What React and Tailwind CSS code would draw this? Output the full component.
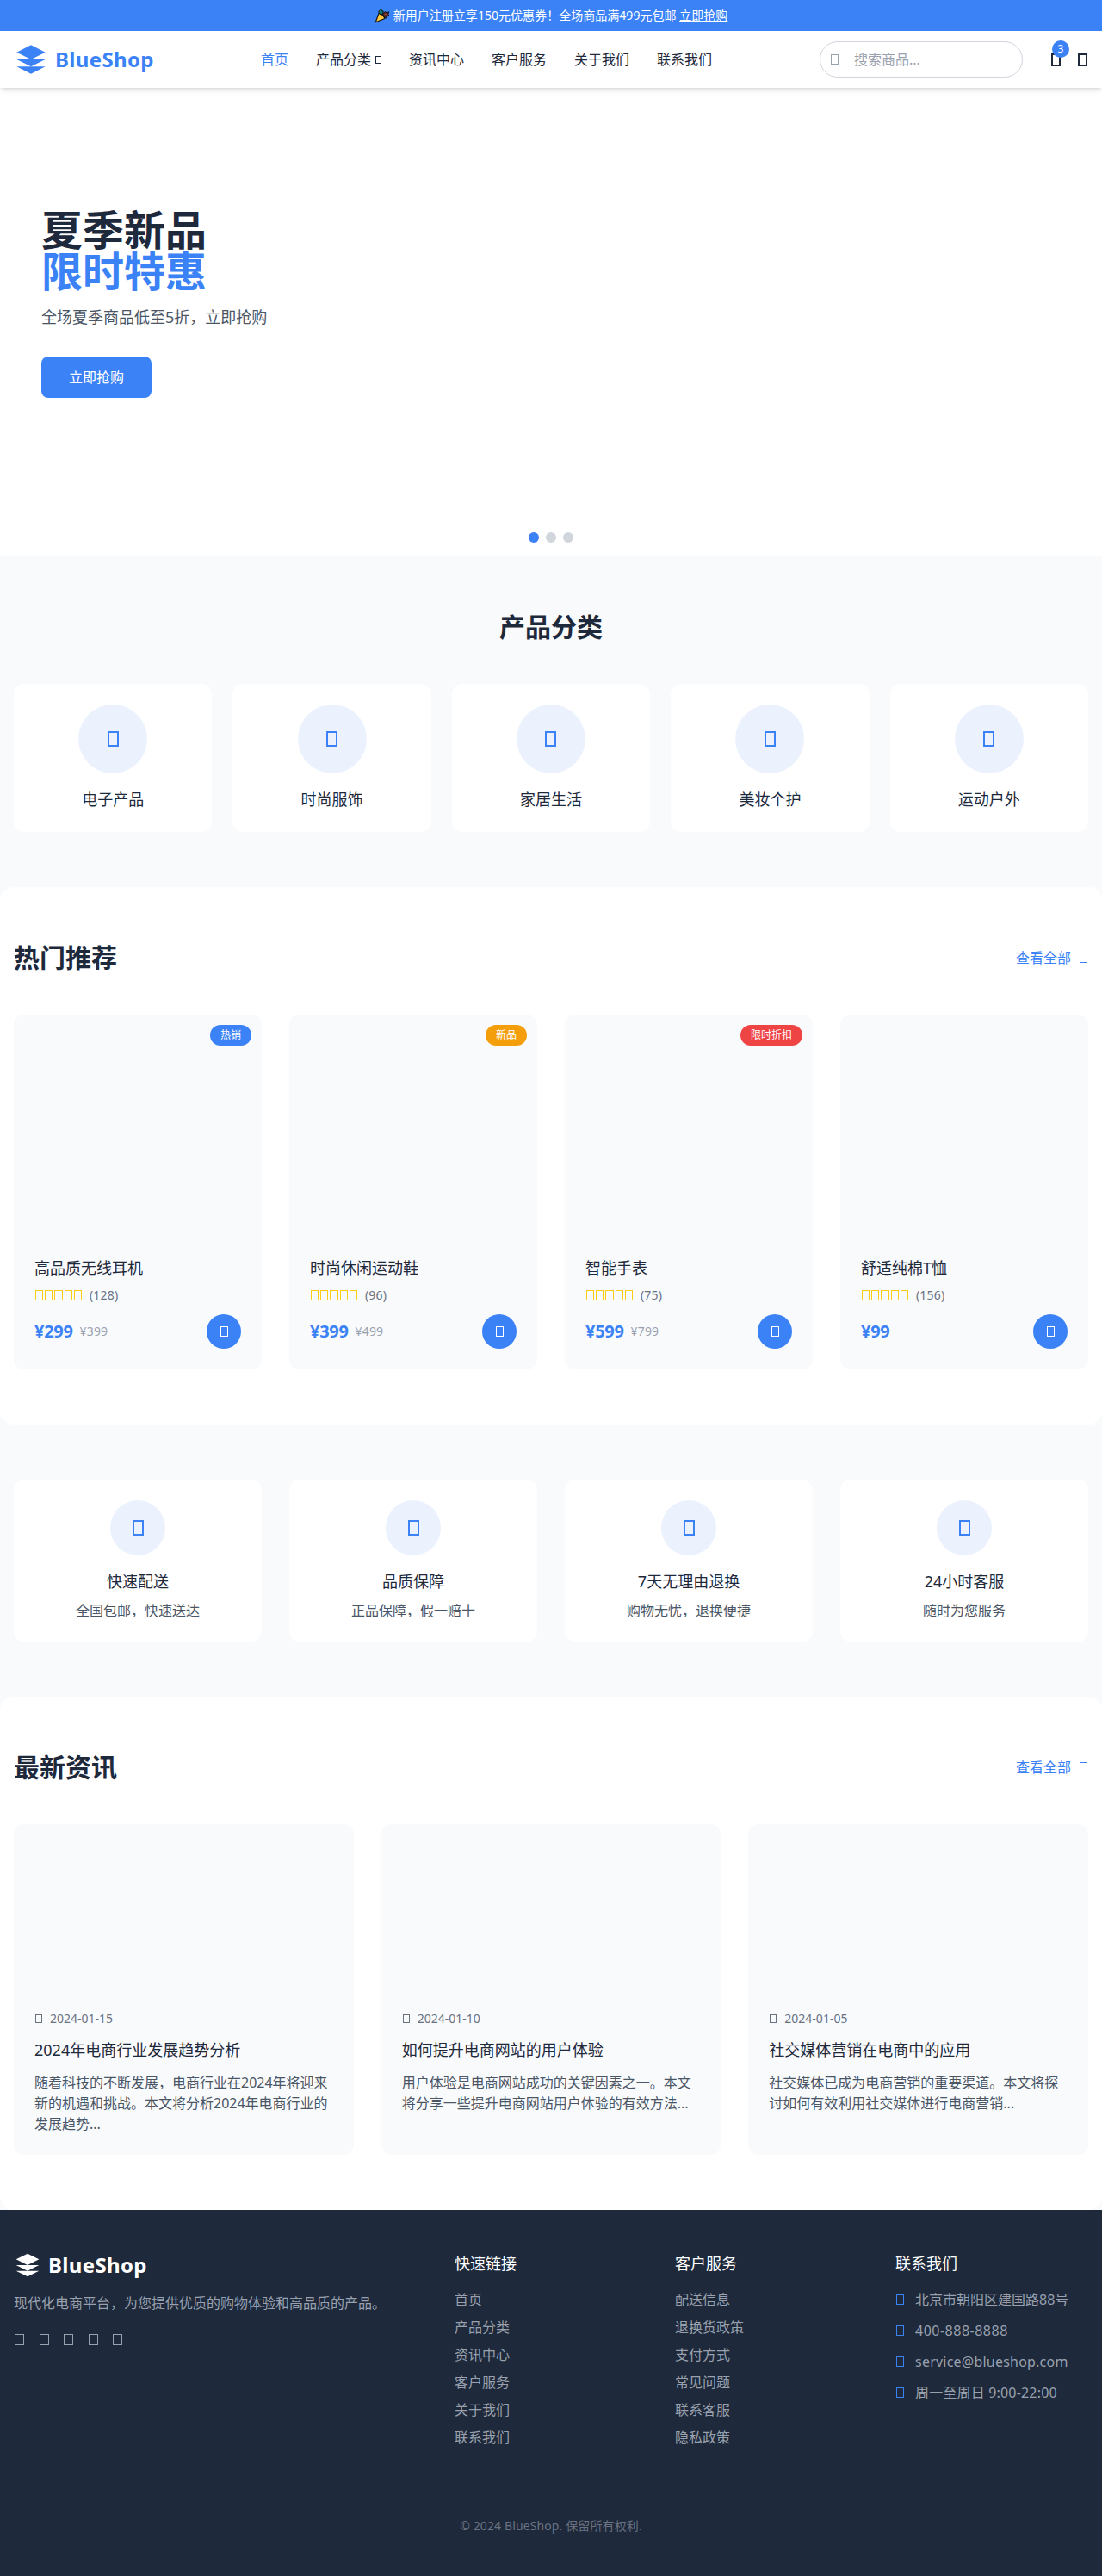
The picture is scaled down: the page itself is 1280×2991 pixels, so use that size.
import React from 'react';

const navLinks = ['资讯中心', '客户服务', '关于我们', '联系我们'];

const categories = ['电子产品', '时尚服饰', '家居生活', '美妆个护', '运动户外'];

const products = [
  { name: '高品质无线耳机', reviews: 128, price: '¥299', oldPrice: '¥399', badge: '热销', badgeColor: 'bg-[#3b82f6]' },
  { name: '时尚休闲运动鞋', reviews: 96, price: '¥399', oldPrice: '¥499', badge: '新品', badgeColor: 'bg-[#f59e0b]' },
  { name: '智能手表', reviews: 75, price: '¥599', oldPrice: '¥799', badge: '限时折扣', badgeColor: 'bg-[#ef4444]' },
  { name: '舒适纯棉T恤', reviews: 156, price: '¥99' },
];

const services = [
  { title: '快速配送', desc: '全国包邮，快速送达' },
  { title: '品质保障', desc: '正品保障，假一赔十' },
  { title: '7天无理由退换', desc: '购物无忧，退换便捷' },
  { title: '24小时客服', desc: '随时为您服务' },
];

const news = [
  {
    date: '2024-01-15',
    title: '2024年电商行业发展趋势分析',
    text: '随着科技的不断发展，电商行业在2024年将迎来\n新的机遇和挑战。本文将分析2024年电商行业的\n发展趋势...',
  },
  {
    date: '2024-01-10',
    title: '如何提升电商网站的用户体验',
    text: '用户体验是电商网站成功的关键因素之一。本文\n将分享一些提升电商网站用户体验的有效方法...',
  },
  {
    date: '2024-01-05',
    title: '社交媒体营销在电商中的应用',
    text: '社交媒体已成为电商营销的重要渠道。本文将探\n讨如何有效利用社交媒体进行电商营销...',
  },
];

const footerColumns = [
  { title: '快速链接', links: ['首页', '产品分类', '资讯中心', '客户服务', '关于我们', '联系我们'] },
  { title: '客户服务', links: ['配送信息', '退换货政策', '支付方式', '常见问题', '联系客服', '隐私政策'] },
];

const contacts = [
  { text: '北京市朝阳区建国路88号', tracking: '' },
  { text: '400-888-8888', tracking: 'tracking-[0.5px]' },
  { text: 'service@blueshop.com', tracking: 'tracking-[0.22px]' },
  { text: '周一至周日 9:00-22:00', tracking: 'tracking-[0.18px]' },
];

// Empty box glyph used for every icon
function Glyph({ className }) {
  return <i className={`block shrink-0 border-current ${className}`} />;
}

function Logo({ className }) {
  return (
    <svg viewBox="0 0 24 24" fill="currentColor" className={className}>
      <path d="M12 2L2 7l10 5 10-5-10-5z" />
      <path d="M2 12l10 5 10-5" />
      <path d="M2 17l10 5 10-5" />
    </svg>
  );
}

function PartyPopper() {
  return (
    <svg viewBox="0 0 18 18" className="w-[18px] h-[18px] mr-1">
      <path d="M5 6.5L1.2 16.8 12 12.5 9.5 8.5z" fill="#ffc83d" stroke="#111" strokeWidth="1.1" strokeLinejoin="round" />
      <path d="M5.2 6.2C3.8 4 6 3.4 7.4 1.4l1 2.2 1.8.4-.6 3.4-2 .4z" fill="#0f7c73" stroke="#111" strokeWidth="1" strokeLinejoin="round" />
      <path d="M9.6 7.4l2.6-2.8 1.8 1.2 2.8-1-1 2.6 1.2 2-2.6.6-.6 2-2.6-1.4z" fill="#5b2a2a" stroke="#111" strokeWidth="1" strokeLinejoin="round" />
      <path d="M12.2 6.6l1.4 1.6" stroke="#e8503a" strokeWidth="1" />
    </svg>
  );
}

function SectionHead({ title }) {
  return (
    <div className="flex items-center justify-between mb-12">
      <h2 className="text-3xl font-bold">{title}</h2>
      <a href="#" className="flex items-center text-[#3b82f6]">
        查看全部
        <Glyph className="w-[9px] h-3 border ml-[10px] mr-px" />
      </a>
    </div>
  );
}

function Header() {
  return (
    <header className="relative z-10 bg-white shadow-md h-[66px] px-4 flex items-center">
      <a href="#" className="flex items-center w-[287px] text-[#3b82f6]">
        <Logo className="w-10 h-10 mr-2" />
        <span className="text-2xl font-bold tracking-[0.35px]">BlueShop</span>
      </a>
      <nav className="flex items-center gap-8">
        <a href="#" className="text-[#3b82f6]">首页</a>
        <a href="#" className="flex items-center w-[76px]">
          产品分类
          <Glyph className="w-[7px] h-[9px] border ml-[5px]" />
        </a>
        {navLinks.map((link) => (
          <a key={link} href="#">{link}</a>
        ))}
      </nav>
      <div className="ml-auto mr-[33px] flex items-center w-[236px] h-[42px] rounded-full border border-gray-300 pl-3 text-gray-400">
        <Glyph className="w-[9px] h-3 border mr-[18px]" />
        搜索商品...
      </div>
      <a href="#" className="relative mr-5">
        <Glyph className="w-[11px] h-[15px] border-2" />
        <span className="absolute -top-[15px] left-px w-5 h-5 rounded-full bg-[#3b82f6] text-white text-xs flex items-center justify-center">3</span>
      </a>
      <a href="#" className="mr-px">
        <Glyph className="w-[11px] h-[15px] border-2" />
      </a>
    </header>
  );
}

function ProductCard({ product }) {
  return (
    <div className="relative bg-[#f8fafc] rounded-xl overflow-hidden">
      {product.badge && (
        <span className={`absolute top-3 right-3 px-3 py-1 rounded-full text-white text-xs ${product.badgeColor}`}>{product.badge}</span>
      )}
      <div className="h-64" />
      <div className="p-6">
        <h3 className="text-lg leading-7 mb-2">{product.name}</h3>
        <div className="flex items-center h-5 mb-3">
          <div className="flex gap-[2px] pl-px text-[#facc15]">
            {[1, 2, 3, 4, 5].map((n) => (
              <Glyph key={n} className="w-[9.2px] h-3 border" />
            ))}
          </div>
          <span className="text-sm tracking-[0.2px] text-gray-500 ml-[9px]">({product.reviews})</span>
        </div>
        <div className="flex items-center justify-between">
          <div className="flex items-center">
            <span className="text-xl font-bold text-[#3b82f6] tracking-[-0.3px]">{product.price}</span>
            {product.oldPrice && <span className="text-sm tracking-[0.15px] text-gray-400 line-through ml-2">{product.oldPrice}</span>}
          </div>
          <button className="w-10 h-10 rounded-full bg-[#3b82f6] text-white flex items-center justify-center">
            <Glyph className="w-[9px] h-3 border" />
          </button>
        </div>
      </div>
    </div>
  );
}

function Footer() {
  return (
    <footer className="bg-[#1e293b] text-gray-400 px-4 py-12">
      <div className="grid grid-cols-5 gap-8">
        <div className="col-span-2">
          <div className="flex items-center h-8 mb-4 text-white">
            <Logo className="w-8 h-8 mr-2" />
            <span className="text-2xl font-bold tracking-[0.35px]">BlueShop</span>
          </div>
          <p>现代化电商平台，为您提供优质的购物体验和高品质的产品。</p>
          <div className="flex gap-[17.5px] mt-6 pl-px">
            {[1, 2, 3, 4, 5].map((n) => (
              <Glyph key={n} className="w-[11px] h-[13px] border" />
            ))}
          </div>
        </div>
        {footerColumns.map((col) => (
          <div key={col.title}>
            <h3 className="text-lg leading-7 text-white mb-4">{col.title}</h3>
            <ul className="space-y-2">
              {col.links.map((link) => (
                <li key={link}><a href="#">{link}</a></li>
              ))}
            </ul>
          </div>
        ))}
        <div>
          <h3 className="text-lg leading-7 text-white mb-4">联系我们</h3>
          <ul className="space-y-3">
            {contacts.map((item) => (
              <li key={item.text} className={`flex items-center whitespace-nowrap ${item.tracking}`}>
                <Glyph className="w-[9px] h-3 border text-[#3b82f6] ml-px mr-[13px]" />
                {item.text}
              </li>
            ))}
          </ul>
        </div>
      </div>
      <p className="mt-[81px] text-center text-sm tracking-[0.12px] text-gray-500">© 2024 BlueShop. 保留所有权利.</p>
    </footer>
  );
}

export default function App() {
  return (
    <div className="bg-[#f8fafc] text-[#1e293b] text-base font-['Noto_Sans','Noto_Sans_CJK_SC',sans-serif]">
      {/* 顶部公告 */}
      <div className="h-9 bg-[#3b82f6] text-white text-sm flex items-center justify-center">
        <PartyPopper />
        <span className="tracking-[0.03px]">新用户注册立享150元优惠券！全场商品满499元包邮 <a href="#" className="underline">立即抢购</a></span>
      </div>

      <Header />

      {/* 轮播图 */}
      <section className="relative bg-white h-[544px] px-12 flex flex-col items-start justify-center">
        <h1 className="text-5xl leading-none font-bold mb-[15px]">
          <span className="block">夏季新品</span>
          <span className="block text-[#3b82f6]">限时特惠</span>
        </h1>
        <p className="text-lg leading-7 text-gray-600 mb-8">全场夏季商品低至5折，立即抢购</p>
        <button className="h-12 px-8 mb-[43px] rounded-lg bg-[#3b82f6] text-white">立即抢购</button>
        <div className="absolute bottom-4 inset-x-0 flex justify-center gap-2">
          <span className="w-3 h-3 rounded-full bg-[#3b82f6]" />
          <span className="w-3 h-3 rounded-full bg-gray-300" />
          <span className="w-3 h-3 rounded-full bg-gray-300" />
        </div>
      </section>

      {/* 产品分类 */}
      <section className="px-4 py-16">
        <h2 className="text-3xl font-bold text-center mb-12">产品分类</h2>
        <div className="grid grid-cols-5 gap-6">
          {categories.map((name) => (
            <div key={name} className="bg-white rounded-xl p-6 flex flex-col items-center">
              <div className="w-20 h-20 rounded-full bg-[#3b82f6]/10 text-[#3b82f6] flex items-center justify-center mb-4">
                <Glyph className="w-[13px] h-[18px] border-2" />
              </div>
              <h3 className="text-lg leading-7">{name}</h3>
            </div>
          ))}
        </div>
      </section>

      {/* 热门推荐 */}
      <section className="bg-white rounded-2xl px-4 py-16">
        <SectionHead title="热门推荐" />
        <div className="grid grid-cols-4 gap-8">
          {products.map((p) => (
            <ProductCard key={p.name} product={p} />
          ))}
        </div>
      </section>

      {/* 服务保障 */}
      <section className="px-4 py-16 grid grid-cols-4 gap-8">
        {services.map((s) => (
          <div key={s.title} className="bg-white rounded-xl p-6 flex flex-col items-center">
            <div className="w-16 h-16 rounded-full bg-[#3b82f6]/10 text-[#3b82f6] flex items-center justify-center mb-4">
              <Glyph className="w-[13px] h-[18px] border-2" />
            </div>
            <h3 className="text-lg leading-7 mb-2">{s.title}</h3>
            <p className="text-gray-600">{s.desc}</p>
          </div>
        ))}
      </section>

      {/* 最新资讯 */}
      <section className="bg-white rounded-2xl px-4 py-16">
        <SectionHead title="最新资讯" />
        <div className="grid grid-cols-3 gap-8">
          {news.map((n) => (
            <article key={n.date} className="bg-[#f8fafc] rounded-xl overflow-hidden">
              <div className="h-48" />
              <div className="p-6">
                <div className="flex items-center text-sm text-gray-500 mb-3">
                  <Glyph className="w-2 h-[10px] border ml-px mr-[9px]" />
                  {n.date}
                </div>
                <h3 className="text-lg leading-7 mb-3">{n.title}</h3>
                <p className="text-gray-600 whitespace-pre">{n.text}</p>
              </div>
            </article>
          ))}
        </div>
      </section>

      <Footer />
    </div>
  );
}
